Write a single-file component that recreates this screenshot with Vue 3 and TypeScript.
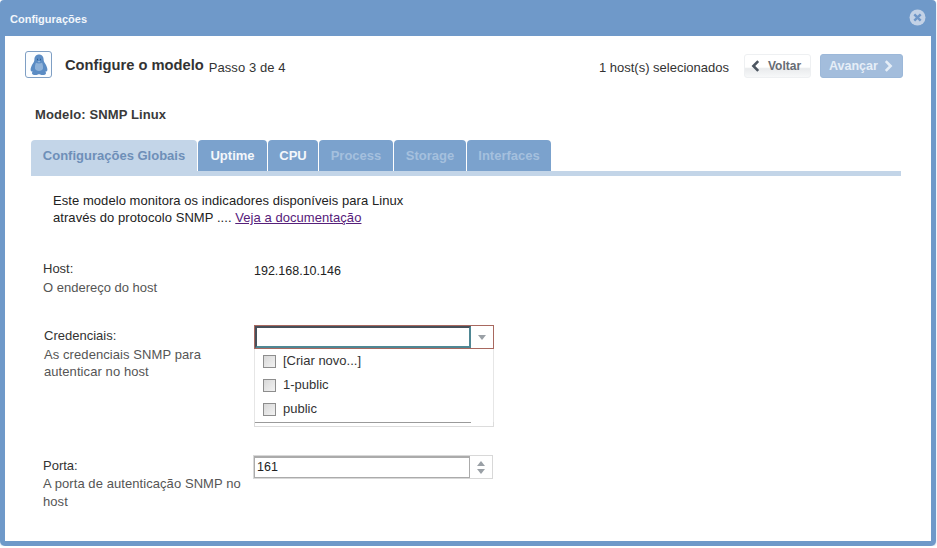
<script setup lang="ts">
const tabs = [
  { label: 'Configurações Globais', state: 'active' },
  { label: 'Uptime', state: '' },
  { label: 'CPU', state: '' },
  { label: 'Process', state: 'disabled' },
  { label: 'Storage', state: 'disabled' },
  { label: 'Interfaces', state: 'disabled' },
]
const options = ['[Criar novo...]', '1-public', 'public']
</script>

<template>
  <div class="window">
    <header class="titlebar">
      <span class="title">Configurações</span>
      <svg class="close" width="17" height="17" viewBox="0 0 17 17">
        <circle cx="8.5" cy="8.5" r="8" fill="#c3d2e6" />
        <path d="M5.3 5.3l6.4 6.4M11.7 5.3l-6.4 6.4" stroke="#6f97c8" stroke-width="2.4" fill="none" />
      </svg>
    </header>
    <main class="body">
      <section class="top">
        <div class="logo">
          <svg width="18" height="22" viewBox="0 0 18 22">
            <path d="M9 0.5c3 0 4.6 2.3 4.6 5 0 1.6.5 2.500 1.500 4 1.300 2 2.300 4.300 2.300 6.200 0 1.300-.8 2-2 1.800.6 1 .8 1.700.4 2.400-.5.900-2.500 1.100-4.300 1.100-1 0-1.800-.7-2.500-.7s-1.500.7-2.500.7c-1.800 0-3.800-.2-4.300-1.100-.4-.7-.2-1.400.4-2.400-1.200.2-2-.5-2-1.800 0-1.900 1-4.200 2.300-6.200 1-1.500 1.500-2.400 1.500-4 0-2.700 1.600-5 4.600-5z" fill="#5b8cc4" />
            <path d="M6 8.500c1 1.200 5 1.200 6 0 .8 2 1.200 3.800 1 6-.3 1.500-2 2.500-4 2.500s-3.700-1-4-2.500c-.2-2.200.2-4 1-6z" fill="#8fb2d9" />
            <path d="M7 5.500h1M10 5.500h1" stroke="#2a5c94" stroke-width="1.300" />
            <path d="M7.400 7.200h3.200L9 8.600z" fill="#a9c4e2" />
          </svg>
        </div>
        <h1 class="heading">Configure o modelo</h1>
        <span class="step">Passo 3 de 4</span>
        <span class="hosts">1 host(s) selecionados</span>
        <button class="btn back" type="button">
          <svg width="9" height="12" viewBox="0 0 9 12"><path d="M7.200 1.200L2.400 6l4.800 4.800" stroke="#4c5560" stroke-width="2.600" fill="none" /></svg>
          Voltar
        </button>
        <button class="btn next" type="button">
          Avançar
          <svg width="9" height="12" viewBox="0 0 9 12"><path d="M1.800 1.200L6.600 6l-4.800 4.800" stroke="#e6eef7" stroke-width="2.600" fill="none" /></svg>
        </button>
      </section>

      <h2 class="model">Modelo: SNMP Linux</h2>

      <nav class="tabs">
        <span v-for="t in tabs" :key="t.label" class="tab" :class="t.state">{{ t.label }}</span>
      </nav>

      <p class="intro">
        Este modelo monitora os indicadores disponíveis para Linux<br />
        através do protocolo SNMP .... <a href="#" class="doc">Veja a documentação</a>
      </p>

      <div class="row row-host">
        <div class="label">
          <div class="name">Host:</div>
          <div class="hint">O endereço do host</div>
        </div>
        <div class="value">192.168.10.146</div>
      </div>

      <div class="row row-cred">
        <div class="label cred-label">
          <div class="name">Credenciais:</div>
          <div class="hint">As credenciais SNMP para<br />autenticar no host</div>
        </div>
        <div class="combo-wrap">
          <div class="combo">
            <div class="combo-input"></div>
            <div class="combo-arrow"><span class="tri-down"></span></div>
          </div>
          <div class="under"><div class="under-left"></div></div>
          <ul class="menu">
            <li v-for="o in options" :key="o" class="opt">
              <span class="check"></span>{{ o }}
            </li>
          </ul>
        </div>
      </div>

      <div class="row row-port">
        <div class="label">
          <div class="name">Porta:</div>
          <div class="hint">A porta de autenticação SNMP no<br />host</div>
        </div>
        <div class="spin">
          <div class="spin-input">161</div>
          <div class="spin-btns"><span class="tri-up"></span><span class="tri-down"></span></div>
        </div>
      </div>
    </main>
  </div>
</template>

<style>
html, body { margin: 0; background: #fff; }
</style>

<style scoped>
.window {
  box-sizing: border-box;
  width: 936px;
  height: 546px;
  background: #6f99c9;
  border-radius: 4px 4px 5px 5px;
  padding: 0 5px 5px 5px;
  display: flex;
  flex-direction: column;
  font-family: "Liberation Sans", Arial, sans-serif;
  font-size: 13px;
  color: #333;
  box-shadow: 0 1px 2px #c5d5e8;
}
.titlebar {
  height: 36px;
  flex: none;
  display: flex;
  align-items: center;
  justify-content: space-between;
  padding: 0 0 0 5px;
}
.title { color: #f2f6fb; font-size: 11px; font-weight: bold; margin-top: 2px; }
.close { margin: -1px 5px 0 0; }
.body {
  flex: 1;
  background: #fff;
  padding: 15px 28px 0 26px;
  min-height: 0;
}
.top { display: flex; align-items: center; height: 27px; margin-left: -6px; }
.logo {
  box-sizing: border-box;
  width: 27px;
  height: 27px;
  border: 1px solid #7f9fc4;
  border-radius: 3px;
  display: flex;
  align-items: center;
  justify-content: center;
  background: #fbfdff;
  flex: none;
}
.heading { margin: 0 0 0 13px; font-size: 14.7px; font-weight: bold; color: #333; }
.step { margin: 6px 0 0 5px; color: #333; letter-spacing: .08px; }
.hosts { margin: 6px 0 0 auto; color: #333; }
.btn {
  box-sizing: border-box;
  height: 24px;
  border-radius: 3px;
  font-family: inherit;
  font-weight: bold;
  display: inline-flex;
  align-items: center;
  align-self: flex-end;
  padding: 0;
}
.back {
  width: 67px;
  margin-left: 15px;
  border: 1px solid #eef0f2;
  background: linear-gradient(#fff 0 55%, #e9ebed 62%, #f7f8f9);
  color: #666c74;
  font-size: 12px;
  padding-left: 6px;
  gap: 8px;
}
.next {
  width: 83px;
  margin-left: 9px;
  border: 1px solid #9cb8d9;
  background: #a3bddc;
  color: #e6eef7;
  font-size: 12.5px;
  padding-left: 8px;
  gap: 6px;
}
.model { margin: 30px 0 0 4px; font-size: 13px; font-weight: bold; color: #3a3a3a; line-height: 14px; letter-spacing: .12px; }
.tabs {
  display: flex;
  margin: 18px 2px 0 0;
  height: 31px;
  border-bottom: 5px solid #c3d5e8;
  gap: 1px;
}
.tab {
  box-sizing: border-box;
  height: 31px;
  background: #7ba2cd;
  color: #f4f7fb;
  font-size: 13px;
  font-weight: bold;
  border-radius: 4px 4px 0 0;
  line-height: 31px;
  text-align: center;
}
.tab:nth-child(2) { width: 69px; }
.tab:nth-child(3) { width: 50px; }
.tab:nth-child(4) { width: 74px; }
.tab:nth-child(5) { width: 72px; }
.tab:nth-child(6) { width: 84px; }
.tab.active {
  width: 166px;
  height: 36px;
  background: #c3d5e8;
  color: #6e8fb8;
  white-space: nowrap;
}
.tab.disabled { color: #a5c0de; }
.intro { margin: 16px 0 0 22px; line-height: 17px; color: #222; letter-spacing: .06px; }
.doc { color: #56207a; }
.row { display: flex; margin-left: 12px; line-height: 18px; box-sizing: border-box; }
.row-host { margin-top: 34px; height: 67px; }
.row-cred { height: 130px; }
.row-port { height: 60px; }
.label { width: 211px; flex: none; color: #333; }
.cred-label { margin-left: 1px; width: 210px; }
.hint { color: #555; margin-top: 1px; }
.row-cred .hint { line-height: 17px; letter-spacing: .08px; }
.row-port .hint { margin-top: 0; letter-spacing: .07px; }
.value { color: #222; font-size: 12.5px; margin-top: 2px; }
.combo-wrap { position: relative; width: 240px; height: 102px; margin-top: -2px; }
.combo {
  box-sizing: border-box;
  height: 24px;
  display: flex;
  border: 1px solid #a8685f;
}
.combo-input {
  box-sizing: border-box;
  width: 216px;
  height: 22px;
  border: 2px solid #4f8794;
  border-top-color: #464f59;
  border-left-color: #464f59;
  background: #fff;
}
.combo-arrow { flex: 1; display: flex; align-items: center; justify-content: center; }
.tri-down { width: 0; height: 0; border: 4px solid transparent; border-top: 5px solid #9aa0a6; border-bottom: 0; display: block; }
.tri-up { width: 0; height: 0; border: 4px solid transparent; border-bottom: 5px solid #9aa0a6; border-top: 0; display: block; }
.under {
  box-sizing: border-box;
  position: absolute;
  top: 97px;
  left: 0;
  width: 240px;
  height: 5px;
  border-bottom: 1px solid #dcdcdc;
  border-left: 1px solid #dcdcdc;
  border-right: 1px solid #dcdcdc;
}
.under-left { width: 216px; height: 0; border-top: 1px solid #9a9a9a; }
.menu {
  position: absolute;
  top: 24px;
  left: 0;
  box-sizing: border-box;
  width: 240px;
  height: 73px;
  margin: 0;
  padding: 0;
  list-style: none;
  background: #fff;
  border-left: 1px solid #e6e6e6;
  border-right: 1px solid #e6e6e6;
}
.opt { height: 24px; display: flex; align-items: center; padding-left: 8px; gap: 7px; color: #333; }
.check {
  box-sizing: border-box;
  width: 13px;
  height: 13px;
  border: 1px solid #8d8d8d;
  background: linear-gradient(135deg, #d8d8d8, #f2f2f2);
}
.spin {
  box-sizing: border-box;
  width: 240px;
  height: 24px;
  display: flex;
  border: 1px solid #d8d8d8;
  margin: -2px 0 0 -1px;
}
.spin-input {
  box-sizing: border-box;
  width: 216px;
  height: 22px;
  border: 1px solid #ababab;
  border-top: 2px solid #ababab;
  padding-left: 2px;
  line-height: 18px;
  font-size: 12.5px;
  color: #222;
  background: #fff;
}
.spin-btns { flex: 1; display: flex; flex-direction: column; align-items: center; justify-content: center; gap: 3px; }
</style>
